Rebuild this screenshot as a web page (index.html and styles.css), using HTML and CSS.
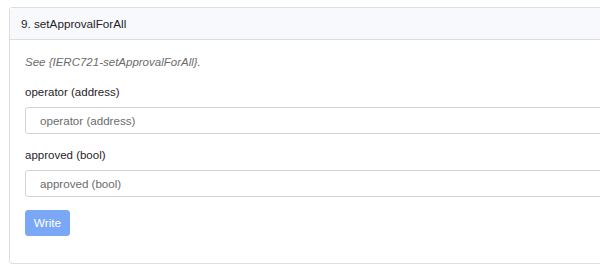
FILE: index.html
```html
<!DOCTYPE html>
<html lang="en">
  <head>
    <meta charset="UTF-8" />
    <meta name="viewport" content="width=device-width, initial-scale=1.0" />
    <title>setApprovalForAll</title>
    <link rel="stylesheet" href="styles.css">
  </head>
  <body>
    <div class="card">
      <div class="card-header">9. setApprovalForAll</div>

      <div class="card-body">
        <p class="desc">See {IERC721-setApprovalForAll}.</p>

        <div class="field">
          <label for="operator">operator (address)</label>
          <input id="operator" type="text" placeholder="operator (address)" />
        </div>

        <div class="field">
          <label for="approved">approved (bool)</label>
          <input id="approved" type="text" placeholder="approved (bool)" />
        </div>

        <button class="writeBtn" disabled>Write</button>
      </div>
    </div>
  </body>
</html>
```

FILE: styles.css
```css
body {
  margin: 0;
  padding: 7px 0 0 9px;
  overflow: hidden;
  font-family: "Liberation Sans", Arial, sans-serif;
  color: #1f2327;
  background: #fff;
}

.card {
  width: 640px;
  border: 1px solid #dedede;
  border-radius: 3px;
}

.card-header {
  height: 31px;
  line-height: 31px;
  padding: 0 11px;
  font-size: 11.7px;
  background: #f7f9fc;
  border-bottom: 1px solid #dedede;
}

.card-body {
  padding: 12px 15px 27px;
}

.desc {
  margin: 0 0 10px;
  line-height: 20px;
  font-size: 11.5px;
  font-style: italic;
  color: #6c6c6c;
}

.field {
  display: flex;
  flex-direction: column;
  gap: 5px;
  margin-bottom: 11px;
}

label {
  line-height: 20px;
  font-size: 11.5px;
}

input {
  box-sizing: border-box;
  height: 27px;
  padding: 0 14px;
  border: 1px solid #d4d4d4;
  border-radius: 3px;
  font-family: inherit;
  font-size: 11.6px;
}

input::placeholder {
  color: #6c6c6c;
}

.writeBtn {
  margin-top: 2px;
  width: 45px;
  height: 26px;
  padding: 0;
  border: 1px solid #7aa7f6;
  border-radius: 3px;
  background: #7aa7f6;
  color: #fff;
  font-family: inherit;
  font-size: 11.8px;
}
```
